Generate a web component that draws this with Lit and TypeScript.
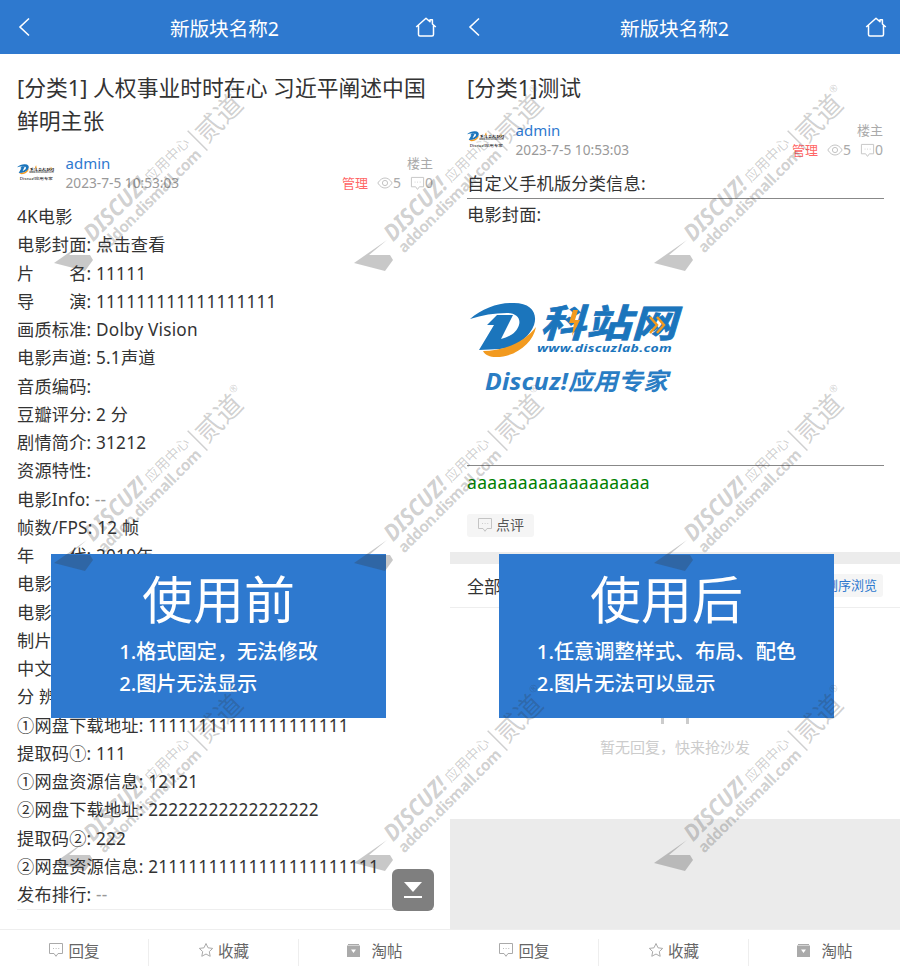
import { LitElement, html, css, svg } from "lit";
import { customElement, property } from "lit/decorators.js";

const logo = (width: number) => html`
  <svg class="logo" width=${width} viewBox="0 0 215 95" aria-label="科站网">
    <path fill="#1b75bc" d="M0 18C12 7 30 1 44 2 61 2 68 12 64 24 59 37 45 47 30 48L9 49 24 24H17L27 14H43L31 38C40 36 47 31 49 24 51 17 46 12 37 12 24 12 12 14 0 18Z" />
    <path fill="#f29a1f" d="M13 50C30 50 52 44 66 26 63 42 46 56 26 56 20 56 15 54 13 50Z" />
    <text class="logo-cn" x="70" y="36" textLength="137" lengthAdjust="spacingAndGlyphs">科站网</text>
    <path fill="#f29a1f" d="M103 9 99 22H104L102 35 110 19H105L108 9Z" />
    <path fill="none" stroke="#f29a1f" stroke-width="2.500" d="M180 16l7 8-7 8M187 16l7 8-7 8" />
    <text class="logo-url" x="67" y="51" textLength="135" lengthAdjust="spacingAndGlyphs">www.discuzlab.com</text>
    <text class="logo-sub" x="15" y="89" textLength="183" lengthAdjust="spacingAndGlyphs">Discuz!应用专家</text>
  </svg>
`;

const commentIcon = (size = 15) => html`
  <svg width=${size} height=${size} viewBox="0 0 16 16" fill="none" stroke="currentColor" stroke-width="1">
    <path d="M1.500 1.500h13v10h-4.500l-2 2.800-2-2.800h-4.500z" stroke-linejoin="round" />
    <path d="M5 6.500h.8M7.700 6.500h.8M10.400 6.500h.8" />
  </svg>
`;

const eyeIcon = html`
  <svg width="16" height="12" viewBox="0 0 16 12" fill="none" stroke="currentColor" stroke-width="1">
    <path d="M.8 6C3 2.500 5.500 1 8 1s5 1.500 7.200 5C13 9.500 10.500 11 8 11S3 9.500 .8 6z" />
    <circle cx="8" cy="6" r="2.600" />
  </svg>
`;

@customElement("thread-head")
class ThreadHead extends LitElement {
  static styles = css`
    :host {
      display: block;
      padding: 16.5px 17px 0;
    }
    h1 {
      margin: 0;
      font-size: 21.8px;
      line-height: 33px;
      font-weight: 400;
      color: #333;
    }
    .author {
      display: flex;
      margin-top: 16.5px;
      height: 40px;
      align-items: stretch;
    }
    .avatar {
      width: 48.5px;
      display: flex;
      align-items: center;
      flex: none;
    }
    .who {
      flex: 1;
    }
    .name {
      font-size: 15px;
      line-height: 20px;
      color: #2e79cf;
    }
    .date {
      font-size: 13.7px;
      line-height: 20px;
      color: #999;
    }
    .side {
      text-align: right;
      color: #aaa;
      font-size: 13px;
      line-height: 20px;
    }
    .stats {
      display: flex;
      align-items: center;
      justify-content: flex-end;
      height: 20px;
      font-size: 14px;
    }
    .manage {
      color: #f66;
      font-size: 13px;
      margin-right: 9px;
    }
    .stats svg {
      color: #c4c4c4;
    }
    .count + svg {
      margin-left: 9px;
    }
  `;

  @property() heading = "";

  render() {
    return html`
      <h1>${this.heading}</h1>
      <div class="author">
        <div class="avatar">${logo(39)}</div>
        <div class="who">
          <div class="name">admin</div>
          <div class="date">2023-7-5 10:53:03</div>
        </div>
        <div class="side">
          <div>楼主</div>
          <div class="stats">
            <span class="manage">管理</span>
            ${eyeIcon}<span class="count">5</span>
            ${commentIcon(15)}<span class="count">0</span>
          </div>
        </div>
      </div>
    `;
  }
}

@customElement("thread-foot")
class ThreadFoot extends LitElement {
  static styles = css`
    :host {
      display: flex;
      flex: none;
      height: 37px;
      box-sizing: border-box;
      border-top: 1px solid #eee;
      background: #fff;
      color: #666;
      font-size: 15.5px;
    }
    .item {
      display: flex;
      align-items: center;
      justify-content: center;
      gap: 4px;
      margin-top: 9px;
      padding-bottom: 5px;
      box-sizing: border-box;
    }
    .one {
      flex: 0 0 148px;
    }
    .two {
      flex: 0 0 150px;
    }
    .three {
      flex: 1;
    }
    .item + .item {
      border-left: 1px solid #eee;
    }
    .muted {
      color: #aaa;
      display: flex;
    }
    .gap {
      margin-left: 6px;
    }
  `;

  render() {
    return html`
      <div class="item one"><span class="muted">${commentIcon(16)}</span>回复</div>
      <div class="item two">
        <span class="muted">
          <svg width="16" height="16" viewBox="0 0 16 16" fill="none" stroke="currentColor">
            <path d="M8 1.500l2 4.300 4.700.6-3.400 3.200.9 4.700L8 12l-4.200 2.300.9-4.700L1.300 6.400 6 5.800z" stroke-linejoin="round" />
          </svg>
        </span>收藏
      </div>
      <div class="item three">
        <span class="muted">
          <svg width="15" height="15" viewBox="0 0 15 15">
            <path fill="currentColor" d="M1 2.500h13V14H1zM2 1h11v1H2z" />
            <path fill="#fff" d="M5 6.500h5L7.500 10z" />
          </svg>
        </span>
        <span class="gap">淘帖</span>
      </div>
    `;
  }
}

@customElement("top-bar")
class TopBar extends LitElement {
  static styles = css`
    :host {
      display: flex;
      flex: none;
      align-items: center;
      justify-content: space-between;
      height: 54px;
      padding: 0 13px 0 18px;
      background: #2e79cf;
      color: #fff;
      font-size: 19.6px;
      box-sizing: border-box;
    }
    svg {
      display: block;
    }
    .back {
      margin-right: 4px;
    }
  `;

  render() {
    return html`
      <svg class="back" width="12" height="20" viewBox="0 0 12 20" fill="none" stroke="#fff" stroke-width="1.600">
        <path d="M11 1.500 2 10l9 8.500" />
      </svg>
      <span>新版块名称2</span>
      <svg width="22" height="21" viewBox="0 0 22 21" fill="none" stroke="#fff" stroke-width="1.500">
        <path d="M1.200 10 11 1.200l4 3.600V2.800h2.400V7l3.400 3M3.500 8.500v9A1.500 1.500 0 0 0 5 19h12a1.500 1.500 0 0 0 1.500-1.500v-9" stroke-linejoin="round" />
      </svg>
    `;
  }
}

@customElement("note-box")
class NoteBox extends LitElement {
  static styles = css`
    :host {
      position: absolute;
      top: 554px;
      left: 51px;
      width: 335px;
      height: 164px;
      background: #2e79cf;
      color: #fff;
      text-align: center;
      box-sizing: border-box;
      padding-top: 16px;
    }
    .big {
      font-size: 51px;
      line-height: 58px;
    }
    ul {
      list-style: none;
      display: inline-block;
      margin: 7px 0 0;
      padding: 0;
      text-align: left;
      font-size: 20.2px;
      font-weight: 500;
      line-height: 32px;
    }
  `;

  @property() heading = "";
  @property({ type: Array }) lines: string[] = [];

  render() {
    return html`
      <div class="big">${this.heading}</div>
      <ul>
        ${this.lines.map((l) => html`<li>${l}</li>`)}
      </ul>
    `;
  }
}

const leftRows: [string, string?][] = [
  ["4K电影"],
  ["电影封面: ", "点击查看"],
  ["片　　名: ", "11111"],
  ["导　　演: ", "111111111111111111"],
  ["画质标准: ", "Dolby Vision"],
  ["电影声道: ", "5.1声道"],
  ["音质编码:"],
  ["豆瓣评分: ", "2 分"],
  ["剧情简介: ", "31212"],
  ["资源特性:"],
  ["电影Info: ", "--"],
  ["帧数/FPS: ", "12 帧"],
  ["年　　代: ", "2019年"],
  ["电影"],
  ["电影"],
  ["制片"],
  ["中文"],
  ["分 辨"],
  ["①网盘下载地址: ", "11111111111111111111"],
  ["提取码①: ", "111"],
  ["①网盘资源信息: ", "12121"],
  ["②网盘下载地址: ", "22222222222222222"],
  ["提取码②: ", "222"],
  ["②网盘资源信息: ", "21111111111111111111111"],
  ["发布排行: ", "--"],
];

@customElement("app-root")
class AppRoot extends LitElement {
  static styles = css`
    :host {
      display: block;
      position: relative;
      width: 900px;
      height: 966px;
      overflow: hidden;
      background: #fff;
      font-family: "Noto Sans", "Noto Sans CJK SC", sans-serif;
      color: #333;
    }
    .panels {
      display: flex;
      height: 100%;
    }
    .panel {
      position: relative;
      flex: 1 0 50%;
      display: flex;
      flex-direction: column;
      height: 100%;
      overflow: hidden;
    }
    .main {
      flex: 1;
      min-height: 0;
      display: flex;
      flex-direction: column;
    }
    .body {
      margin-top: 10px;
      padding: 0 16px 0 17px;
      font-size: 17.2px;
      letter-spacing: 0.2px;
      line-height: 28.25px;
    }
    .rows {
      border-bottom: 1px solid #eee;
      white-space: nowrap;
    }
    .dash {
      color: #999;
    }
    hr {
      border: 0;
      border-top: 1px solid #888;
      margin: 0;
    }
    .label {
      margin-top: 2px;
    }
    .image {
      height: 235px;
      display: flex;
      align-items: flex-end;
      padding-bottom: 69px;
      box-sizing: border-box;
      margin-left: 3px;
    }
    .green {
      color: #008000;
      margin-top: 2px;
      font-size: 17.5px;
      letter-spacing: 0.35px;
    }
    .review {
      display: inline-flex;
      align-items: center;
      gap: 3px;
      height: 23px;
      margin-top: 18px;
      padding: 0 10px;
      background: #f5f5f5;
      border-radius: 3px;
      font-size: 14px;
      letter-spacing: 0;
      color: #555;
      vertical-align: top;
    }
    .review svg {
      color: #c4c4c4;
    }
    .band {
      flex: none;
      height: 12px;
      margin-top: 15px;
      background: #ececec;
    }
    .tabs {
      flex: none;
      display: flex;
      align-items: center;
      justify-content: space-between;
      height: 44px;
      box-sizing: border-box;
      padding: 0 17px;
      border-bottom: 1px solid #eee;
      font-size: 17px;
    }
    .order {
      height: 23px;
      line-height: 23px;
      padding: 0 6px;
      font-size: 13px;
      background: #f5f5f5;
      border-radius: 3px;
      color: #2e79cf;
    }
    .empty {
      flex: 1;
      text-align: center;
      padding-top: 75px;
      color: #ccc;
      font-size: 15px;
      line-height: 24px;
    }
    .empty svg {
      display: block;
      margin: 0 auto 8px;
    }
    .blank {
      flex: none;
      height: 110px;
      background: #ebebeb;
    }
    .logo {
      display: block;
      flex: none;
    }
    .logo-cn {
      font: italic 700 38px "Noto Sans CJK SC", sans-serif;
      fill: #1b75bc;
      stroke: #1b75bc;
      stroke-width: 0.8px;
    }
    .logo-url {
      font: italic 700 10.500px "Noto Sans", sans-serif;
      fill: #1b75bc;
    }
    .logo-sub {
      font: italic 700 24px "Noto Sans", "Noto Sans CJK SC", sans-serif;
      fill: #2a7dc4;
    }
    .down {
      position: absolute;
      left: 392px;
      top: 869px;
      width: 42px;
      height: 42px;
      border-radius: 6px;
      background: #7f7f7f;
      display: flex;
      align-items: center;
      justify-content: center;
    }
    .right-box {
      left: 49px;
    }
    .marks {
      position: absolute;
      inset: 0;
      pointer-events: none;
    }
    .marks .plane {
      fill: rgba(50, 50, 50, 0.27);
    }
    .marks text {
      fill: rgba(50, 50, 50, 0.23);
    }
    .wm-a {
      font: italic 700 23px "Noto Sans", sans-serif;
    }
    .wm-b {
      font: 14px "Noto Sans CJK SC", sans-serif;
    }
    .wm-c {
      font: 700 15.500px "Noto Sans", sans-serif;
    }
    .wm-d {
      font: 27px "Noto Sans CJK SC", sans-serif;
    }
    .wm-e {
      font: 10px "Noto Sans", sans-serif;
    }
    .marks line {
      stroke: rgba(50, 50, 50, 0.23);
      stroke-width: 1.500;
    }
  `;

  private cell(value: string) {
    return value === "--" ? html`<span class="dash">--</span>` : value;
  }

  private watermarks() {
    const tiles: [number, number][] = [];
    for (const y of [263, 563, 863]) {
      for (const x of [54, 354, 654]) tiles.push([x, y]);
    }
    return tiles.map(
      ([x, y]) => svg`
        <g transform="translate(${x} ${y})">
          <path class="plane" d="M0 0 33-23 15-8H36L39-3 31 8z" />
          <g transform="rotate(-45)">
            <text class="wm-a" x="42" y="13" textLength="79" lengthAdjust="spacingAndGlyphs">DISCUZ!</text>
            <text class="wm-b" x="125" y="12" textLength="56">应用中心</text>
            <line x1="188" y1="1" x2="188" y2="29" />
            <text class="wm-d" x="192" y="24" textLength="54">贰道</text>
            <text class="wm-e" x="246" y="7">®</text>
            <text class="wm-c" x="42" y="29" textLength="139">addon.dismall.com</text>
          </g>
        </g>
      `
    );
  }

  render() {
    return html`
      <div class="panels">
        <section class="panel">
          <top-bar></top-bar>
          <div class="main">
            <thread-head heading="[分类1] 人权事业时时在心 习近平阐述中国鲜明主张"></thread-head>
            <div class="body">
              <div class="rows">
                ${leftRows.map(
                  ([k, v]) => html`<div>${k}${v ? this.cell(v) : ""}</div>`
                )}
              </div>
            </div>
          </div>
          <thread-foot></thread-foot>
          <note-box heading="使用前" .lines=${["1.格式固定，无法修改", "2.图片无法显示"]}></note-box>
          <div class="down">
            <svg width="20" height="18" viewBox="0 0 20 18" fill="#fff">
              <path d="M1 1h18L10 11z" />
              <path d="M1 15h18v2H1z" />
            </svg>
          </div>
        </section>
        <section class="panel">
          <top-bar></top-bar>
          <div class="main">
            <thread-head heading="[分类1]测试"></thread-head>
            <div class="body">
              <div>自定义手机版分类信息:</div>
              <hr />
              <div class="label">电影封面:</div>
              <div class="image">${logo(215)}</div>
              <hr />
              <div class="green">aaaaaaaaaaaaaaaaaa</div>
              <div class="review">${commentIcon(16)}点评</div>
            </div>
            <div class="band"></div>
            <div class="tabs">
              <span>全部回复</span>
              <span class="order">倒序浏览</span>
            </div>
            <div class="empty">
              <svg width="44" height="44" viewBox="0 0 44 44" fill="#ccc">
                <path d="M2 30h40v3H2zM8 33h3v8H8zM33 33h3v8h-3zM6 12h32v18H6z" />
              </svg>
              暂无回复，快来抢沙发
            </div>
            <div class="blank"></div>
          </div>
          <thread-foot></thread-foot>
          <note-box
            class="right-box"
            heading="使用后"
            .lines=${["1.任意调整样式、布局、配色", "2.图片无法可以显示"]}
          ></note-box>
        </section>
      </div>
      <svg class="marks" width="900" height="966" viewBox="0 0 900 966">${this.watermarks()}</svg>
    `;
  }
}
